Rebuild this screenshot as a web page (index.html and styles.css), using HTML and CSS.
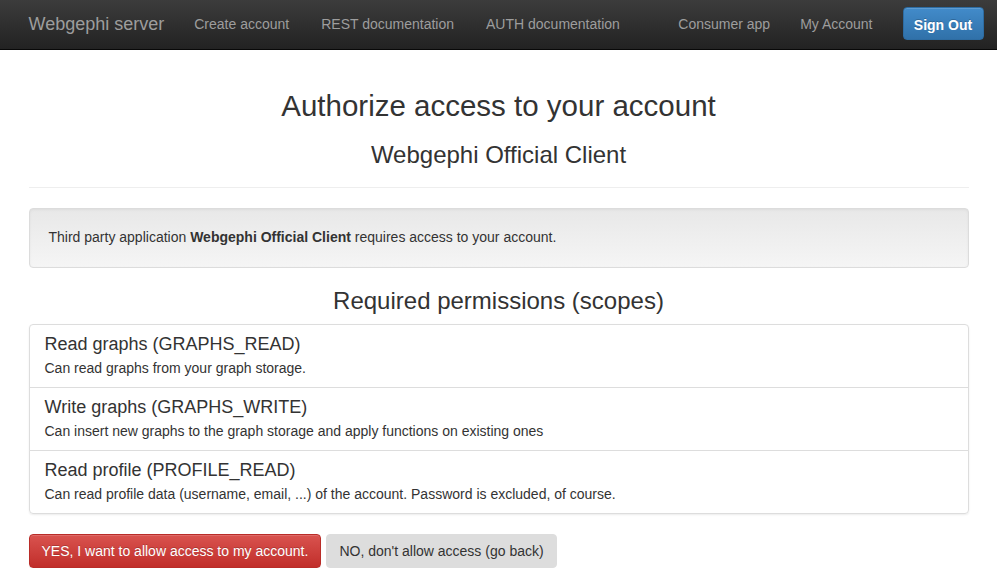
FILE: index.html
```html
<!DOCTYPE html>
<html>
<head>
<meta charset="utf-8">
<title>Authorize</title>
<link rel="stylesheet" href="styles.css">
</head>
<body>
<nav class="navbar">
  <div class="container nav-inner">
    <a class="brand" href="#">Webgephi server</a>
    <ul class="nav">
      <li><a href="#">Create account</a></li>
      <li><a href="#">REST documentation</a></li>
      <li><a href="#">AUTH documentation</a></li>
    </ul>
    <ul class="nav nav-right">
      <li><a href="#">Consumer app</a></li>
      <li><a href="#">My Account</a></li>
      <li class="btn-item"><button class="btn-signout">Sign Out</button></li>
    </ul>
  </div>
</nav>
<main class="container main">
  <h1 class="title">Authorize access to your account</h1>
  <h3 class="sub">Webgephi Official Client</h3>
  <hr class="sep">
  <div class="well">Third party application <strong>Webgephi Official Client</strong> requires access to your account.</div>
  <h3 class="sub">Required permissions (scopes)</h3>
  <div class="list-group">
    <div class="item">
      <h4 class="item-head">Read graphs (GRAPHS_READ)</h4>
      <p class="item-text">Can read graphs from your graph storage.</p>
    </div>
    <div class="item">
      <h4 class="item-head">Write graphs (GRAPHS_WRITE)</h4>
      <p class="item-text">Can insert new graphs to the graph storage and apply functions on existing ones</p>
    </div>
    <div class="item">
      <h4 class="item-head">Read profile (PROFILE_READ)</h4>
      <p class="item-text">Can read profile data (username, email, ...) of the account. Password is excluded, of course.</p>
    </div>
  </div>
  <div class="actions">
    <button class="btn btn-yes">YES, I want to allow access to my account.</button>
    <button class="btn btn-no">NO, don't allow access (go back)</button>
  </div>
</main>
</body>
</html>
```
FILE: styles.css
```css
* { box-sizing: border-box; }
html, body { margin: 0; padding: 0; }
body {
  font-family: "Liberation Sans", Arial, Helvetica, sans-serif;
  font-size: 14px;
  line-height: 1.42857;
  color: #333;
  background: #fff;
}
a { text-decoration: none; }
.container {
  width: 970px;
  margin: 0 auto;
  padding: 0 15px;
}
.main { display: flow-root; }
.navbar {
  height: 50px;
  background: linear-gradient(to bottom, #3c3c3c 0%, #222 100%);
  border-bottom: 1px solid #080808;
  margin-bottom: 20px;
}
.nav-inner {
  display: flex;
  align-items: flex-start;
  height: 49px;
}
.brand {
  display: block;
  margin-left: -15px;
  padding: 14px 15px 15px;
  height: 49px;
  font-size: 18px;
  line-height: 20px;
  color: #9d9d9d;
}
.nav {
  list-style: none;
  margin: 0;
  padding: 0;
  display: flex;
}
.nav li a {
  display: block;
  padding: 14px 15px 15px;
  line-height: 20px;
  color: #9d9d9d;
  font-size: 14px;
}
.nav li:first-child a { padding-right: 17px; }
.nav li:nth-child(2) a { padding-right: 17px; }
.nav-right {
  margin-left: auto;
  margin-right: -15px;
}
.nav-right li:first-child a, .nav-right li:nth-child(2) a { padding-right: 15px; }
.btn-item { padding: 7px 0 0 15px; }
.btn-signout {
  font-family: inherit;
  font-weight: bold;
  font-size: 14px;
  line-height: 20px;
  color: #fff;
  height: 33px;
  width: 81px;
  padding: 7px 0 4px;
  border: 1px solid #2d6ca2;
  border-radius: 4px;
  background: linear-gradient(to bottom, #428bca 0%, #3071a9 100%);
  text-shadow: 0 -1px 0 rgba(0,0,0,0.2);
  box-shadow: inset 0 1px 0 rgba(255,255,255,0.15);
}
.title {
  margin: 20px 0 10px;
  font-size: 29.5px;
  font-weight: 500;
  line-height: 1.1;
  text-align: center;
}
.sub {
  margin: 20px 0 10px;
  font-size: 24px;
  font-weight: 500;
  line-height: 1.1;
  text-align: center;
}
.sep {
  margin: 18px 0 20px;
  border: 0;
  border-top: 1px solid #eee;
}
.well {
  min-height: 20px;
  padding: 19px;
  margin-bottom: 20px;
  border: 1px solid #dcdcdc;
  border-radius: 4px;
  background: linear-gradient(to bottom, #e8e8e8 0%, #f5f5f5 100%);
  box-shadow: inset 0 1px 3px rgba(0,0,0,0.05), 0 1px 0 rgba(255,255,255,0.1);
}
.list-group {
  margin-bottom: 20px;
  border-radius: 4px;
  box-shadow: 0 1px 2px rgba(0,0,0,0.075);
}
.item {
  padding: 10px 15px;
  margin-bottom: -1px;
  border: 1px solid #ddd;
  background: #fff;
}
.item:first-child { border-radius: 4px 4px 0 0; }
.item:last-child { border-radius: 0 0 4px 4px; margin-bottom: 0; }
.item-head {
  margin: 0 0 5px;
  font-size: 18px;
  font-weight: 500;
  line-height: 19px;
}
.item-text {
  margin: 0;
  font-size: 14px;
  line-height: 18px;
}
.actions { display: flex; gap: 5px; }
.btn {
  font-family: inherit;
  font-size: 14px;
  line-height: 20px;
  padding: 6px 12px;
  height: 34px;
  border-radius: 4px;
  cursor: pointer;
}
.btn-yes {
  color: #fff;
  border: 1px solid #b92c28;
  background: linear-gradient(to bottom, #d9534f 0%, #c12e2a 100%);
  text-shadow: 0 -1px 0 rgba(0,0,0,0.2);
  box-shadow: inset 0 1px 0 rgba(255,255,255,0.15), 0 1px 1px rgba(0,0,0,0.075);
}
.btn-no {
  color: #333;
  border: 1px solid #ddd;
  background: #ddd;
}
```
